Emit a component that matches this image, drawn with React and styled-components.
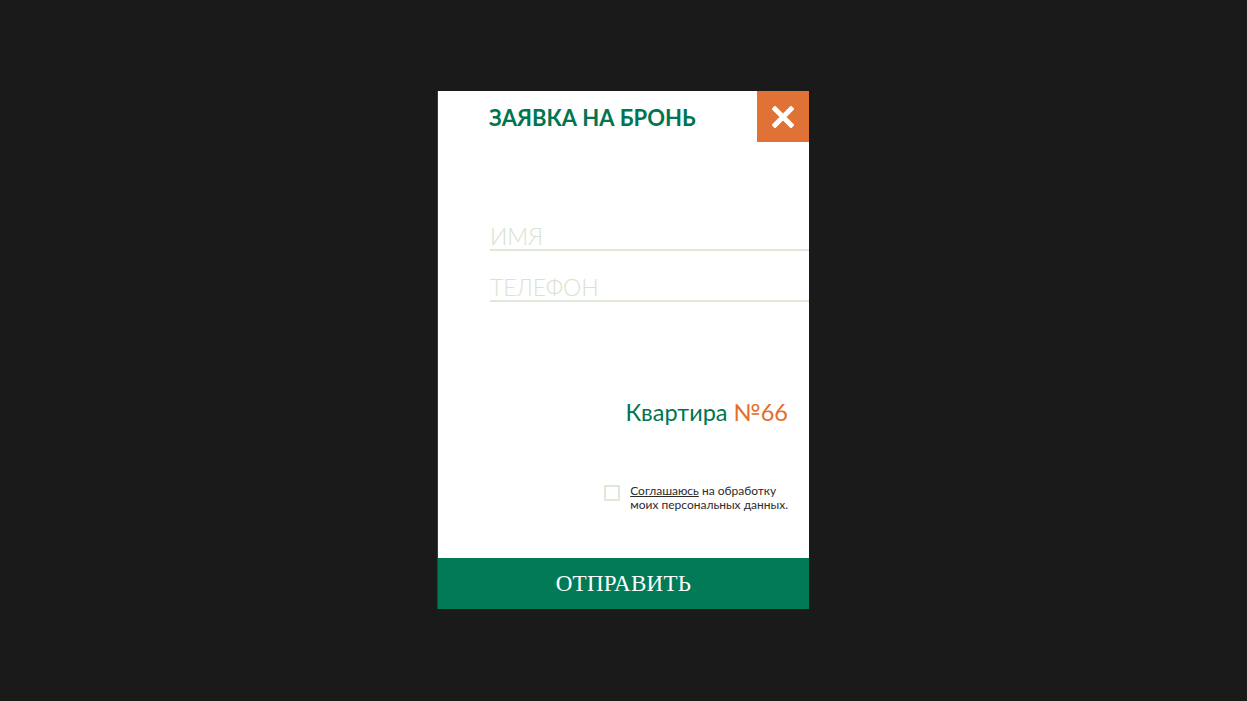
import React, { useState } from "react";
import styled, { createGlobalStyle } from "styled-components";

const GlobalStyle = createGlobalStyle`
  html, body {
    margin: 0;
    padding: 0;
    background: #1a1a1a;
  }
  body {
    font-family: "Lato", "Noto Sans", sans-serif;
  }
  * { box-sizing: border-box; }
`;

const Overlay = styled.div`
  width: 100vw;
  height: 100vh;
  display: flex;
  justify-content: center;
  padding-top: 91px;
`;

const Modal = styled.div`
  width: 371px;
  height: 518px;
  background: #fff;
  display: flex;
  flex-direction: column;
  box-shadow: -1px 0 0 #3a3a3a;
`;

const Head = styled.div`
  display: flex;
  align-items: center;
  justify-content: space-between;
  height: 51px;
  padding-left: 51px;
`;

const Title = styled.h2`
  margin: 0;
  font-family: "Lato", sans-serif;
  font-weight: 700;
  font-size: 22px;
  color: #00754f;
  padding-top: 1px;
`;

const Close = styled.button`
  width: 52px;
  height: 51px;
  border: 0;
  padding: 0;
  background: #e07236;
  display: flex;
  align-items: center;
  justify-content: center;
  cursor: pointer;
`;

const Form = styled.form`
  flex: 1;
  display: flex;
  flex-direction: column;
  padding-top: 81px;
`;

const Fields = styled.div`
  display: flex;
  flex-direction: column;
  gap: 23px;
  padding-left: 52px;
`;

const Field = styled.input`
  display: block;
  width: 100%;
  height: 28px;
  border: 0;
  border-bottom: 2px solid #dfe9d8;
  outline: none;
  padding: 0;
  font-family: "Lato", sans-serif;
  font-weight: 300;
  font-size: 23px;
  color: #1a1a1a;
  background: transparent;
  &::placeholder {
    color: #d7e3cf;
  }
`;

const Flat = styled.div`
  margin-top: 96px;
  padding-right: 21px;
  text-align: right;
  font-family: "Lato", sans-serif;
  font-weight: 400;
  font-size: 23.5px;
  color: #00754f;
`;

const Num = styled.span`
  color: #e36d2c;
`;

const Agree = styled.label`
  margin-top: 58px;
  align-self: flex-end;
  padding-right: 21px;
  display: flex;
  align-items: flex-start;
  gap: 10px;
  cursor: pointer;
`;

const Box = styled.span`
  width: 16px;
  height: 16px;
  margin-top: 1px;
  border: 2px solid ${(p) => (p.$on ? "#00754f" : "#dfe9d8")};
  background: ${(p) => (p.$on ? "#00754f" : "#fff")};
  flex-shrink: 0;
`;

const AgreeText = styled.span`
  font-family: "Lato", sans-serif;
  font-size: 12px;
  line-height: 14px;
  color: #2b2b2b;
  u {
    text-decoration: underline;
  }
`;

const Submit = styled.button`
  margin-top: auto;
  height: 51px;
  border: 0;
  background: #007b56;
  color: #fff;
  font-family: "Liberation Serif", "DejaVu Serif", serif;
  font-size: 23px;
  letter-spacing: 0.3px;
  cursor: pointer;
`;

export default function App() {
  const [agree, setAgree] = useState(false);

  return (
    <>
      <GlobalStyle />
      <Overlay>
        <Modal>
          <Head>
            <Title>ЗАЯВКА НА БРОНЬ</Title>
            <Close type="button" aria-label="Закрыть">
              <svg width="22" height="22" viewBox="0 0 22 22">
                <path d="M3 3L19 19M19 3L3 19" stroke="#fff" strokeWidth="5" strokeLinecap="square" />
              </svg>
            </Close>
          </Head>
          <Form onSubmit={(e) => e.preventDefault()}>
            <Fields>
              <Field placeholder="ИМЯ" />
              <Field placeholder="ТЕЛЕФОН" />
            </Fields>
            <Flat>
              Квартира <Num>№66</Num>
            </Flat>
            <Agree onClick={() => setAgree(!agree)}>
              <Box $on={agree} />
              <AgreeText>
                <u>Соглашаюсь</u> на обработку
                <br />
                моих персональных данных.
              </AgreeText>
            </Agree>
            <Submit type="submit">ОТПРАВИТЬ</Submit>
          </Form>
        </Modal>
      </Overlay>
    </>
  );
}
